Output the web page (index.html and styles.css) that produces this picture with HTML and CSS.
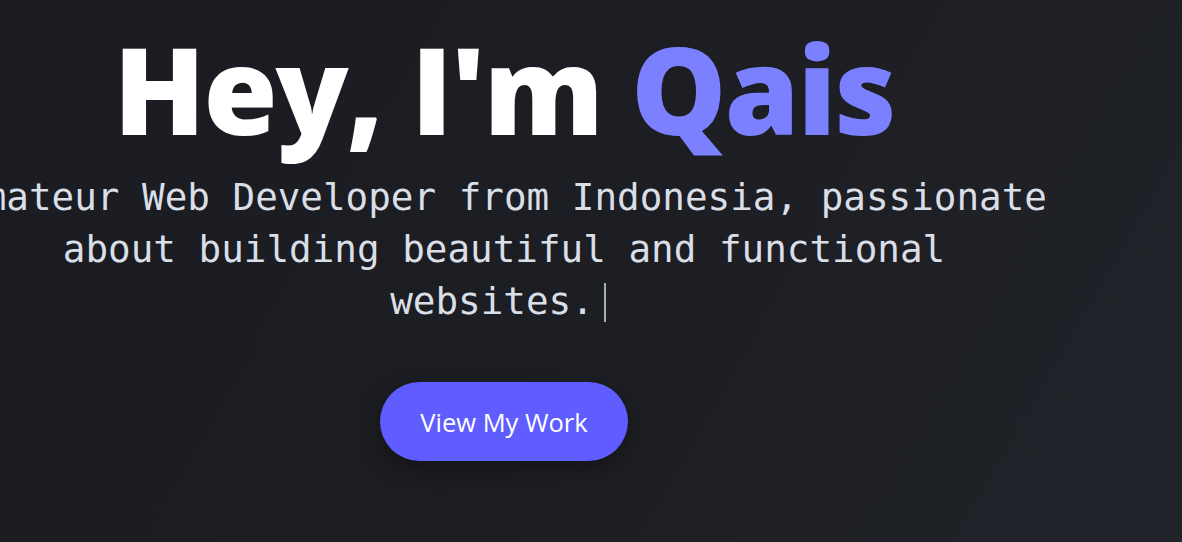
FILE: index.html
```html
<!DOCTYPE html>
<html lang="en">
<head>
<meta charset="utf-8">
<title>Qais</title>
<link rel="stylesheet" href="styles.css">
</head>
<body>
<main class="hero">
  <h1 class="hero-title">Hey, I'm <span class="accent">Qais</span></h1>
  <p class="hero-sub">Amateur Web Developer from Indonesia, passionate about building beautiful and functional websites.<span class="caret"></span></p>
  <a class="btn" href="#work">View My Work</a>
</main>
</body>
</html>
```

FILE: styles.css
```css
html, body {
  margin: 0;
  padding: 0;
  height: 100%;
}
body {
  background: linear-gradient(120deg, #1a1c21 0%, #1c1e23 50%, #21232a 100%);
  overflow: hidden;
  font-family: "Open Sans", "Noto Sans", sans-serif;
}
.hero {
  width: 1008px;
  display: flex;
  flex-direction: column;
  align-items: center;
  padding-top: 17px;
}
.hero-title {
  margin: 0;
  font-family: "Open Sans", "Noto Sans", sans-serif;
  font-weight: 800;
  font-size: 120px;
  line-height: 144px;
  color: #ffffff;
  letter-spacing: -2px;
  white-space: nowrap;
}
.accent {
  color: #7b80ff;
}
.hero-sub {
  flex: none;
  width: 1095px;
  margin: 10px 0 0;
  text-align: center;
  font-family: "DejaVu Sans Mono", "Liberation Mono", monospace;
  font-size: 37.6px;
  line-height: 52px;
  color: #d9dee7;
}
.caret {
  display: inline-block;
  width: 0;
  height: 39px;
  border-left: 2px solid #a9adb6;
  margin-left: 10px;
  margin-right: 12px;
  vertical-align: -8px;
}
.btn {
  margin-top: 55px;
  display: inline-flex;
  align-items: center;
  justify-content: center;
  width: 248px;
  height: 79px;
  box-sizing: border-box;
  border-radius: 40px;
  background: #5f5dff;
  color: #ffffff;
  text-decoration: none;
  font-family: "Open Sans", "Noto Sans", sans-serif;
  font-size: 25.5px;
  box-shadow: 0 8px 22px rgba(0, 0, 0, 0.35);
}
```
